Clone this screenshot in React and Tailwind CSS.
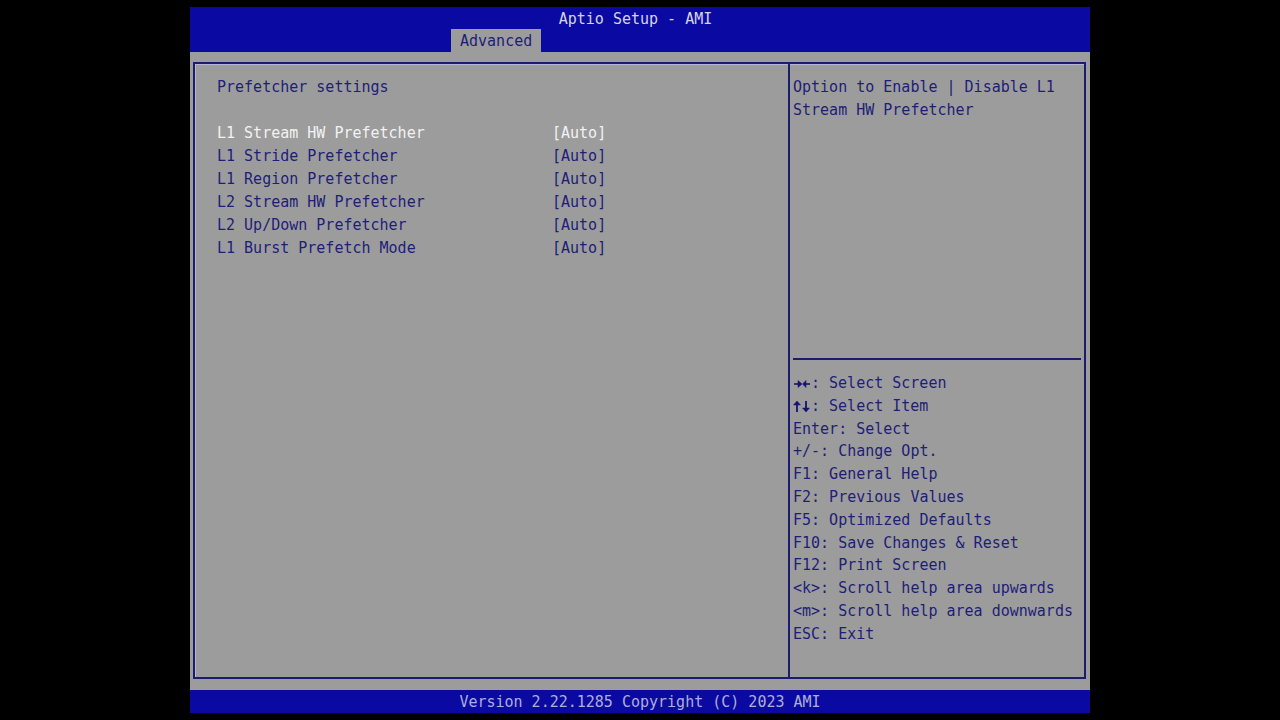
import React from 'react'

const items = [
  { label: 'L1 Stream HW Prefetcher', value: '[Auto]', active: true },
  { label: 'L1 Stride Prefetcher', value: '[Auto]' },
  { label: 'L1 Region Prefetcher', value: '[Auto]' },
  { label: 'L2 Stream HW Prefetcher', value: '[Auto]' },
  { label: 'L2 Up/Down Prefetcher', value: '[Auto]' },
  { label: 'L1 Burst Prefetch Mode', value: '[Auto]' },
]

// arrow glyphs for the first two help lines
const LeftRight = () => (
  <svg width="18" height="23" viewBox="0 0 18 23" className="shrink-0">
    <g fill="#14146e" stroke="#14146e">
      <line x1="1" y1="12" x2="6" y2="12" strokeWidth="1.6" />
      <polygon points="5,8.5 9,12 5,15.5" strokeWidth="0.5" />
      <line x1="17" y1="12" x2="12" y2="12" strokeWidth="1.6" />
      <polygon points="13,8.5 9.5,12 13,15.5" strokeWidth="0.5" />
    </g>
  </svg>
)

const UpDown = () => (
  <svg width="18" height="23" viewBox="0 0 18 23" className="shrink-0">
    <g fill="#14146e" stroke="#14146e">
      <line x1="4" y1="9" x2="4" y2="17" strokeWidth="1.8" />
      <polygon points="0.5,10 4,6 7.5,10" strokeWidth="0.5" />
      <line x1="13" y1="6" x2="13" y2="14" strokeWidth="1.8" />
      <polygon points="9.5,13 13,17 16.5,13" strokeWidth="0.5" />
    </g>
  </svg>
)

const keys = [
  { k: <LeftRight />, text: ': Select Screen' },
  { k: <UpDown />, text: ': Select Item' },
  { k: 'Enter', text: ': Select' },
  { k: '+/-', text: ': Change Opt.' },
  { k: 'F1', text: ': General Help' },
  { k: 'F2', text: ': Previous Values' },
  { k: 'F5', text: ': Optimized Defaults' },
  { k: 'F10', text: ': Save Changes & Reset' },
  { k: 'F12', text: ': Print Screen' },
  { k: '<k>', text: ': Scroll help area upwards' },
  { k: '<m>', text: ': Scroll help area downwards' },
  { k: 'ESC', text: ': Exit' },
]

export default function App() {
  return (
    <div className="w-[1280px] h-[720px] bg-black pt-[7px] pl-[190px] font-['DejaVu_Sans_Mono',monospace] text-[15px] leading-[23px]">
      <div className="w-[900px] h-[706px] flex flex-col">
        {/* Header */}
        <div className="h-[45px] bg-[#0a0aa2] flex flex-col">
          <div className="h-[22px] text-center pr-[9px] text-[#d4d4e4] leading-[24px]">Aptio Setup - AMI</div>
          <div className="flex-1 flex items-end">
            <div className="ml-[261px] w-[90px] h-[23px] bg-[#9c9c9c] pl-[9px] text-[#1e1e78] leading-[25px]">Advanced</div>
          </div>
        </div>

        {/* Body */}
        <div className="flex-1 bg-[#9c9c9c] pt-[10px] pl-[3px] pr-[4px] pb-[11px] flex">
          <div className="flex-1 flex border-2 border-[#1c1c6e] shadow-[inset_1px_1px_0_#b4b4d8]">
            {/* Left panel */}
            <div className="w-[593px] pl-[22px] pt-[12px] text-[#1e1e78]">
              <div>Prefetcher settings</div>
              <div className="h-[23px]" />
              {items.map((it) => (
                <div key={it.label} className={`grid grid-cols-[335px_1fr] ${it.active ? 'text-[#f2f2f2]' : ''}`}>
                  <span>{it.label}</span>
                  <span>{it.value}</span>
                </div>
              ))}
            </div>

            {/* Divider */}
            <div className="w-[2px] bg-[#1c1c6e]" />

            {/* Right panel */}
            <div className="flex-1 flex flex-col pl-[3px] pr-[3px] text-[#1e1e78]">
              <div className="h-[294px] pt-[12px]">
                <div>Option to Enable | Disable L1</div>
                <div>Stream HW Prefetcher</div>
              </div>
              <div className="h-[2px] bg-[#1c1c6e]" />
              <div className="pt-[12px] leading-[22.8px]">
                {keys.map((k, i) => (
                  <div key={i} className="whitespace-pre flex items-center h-[22.8px]">
                    {typeof k.k === 'string' ? <span>{k.k}</span> : k.k}
                    <span>{k.text}</span>
                  </div>
                ))}
              </div>
            </div>
          </div>
        </div>

        {/* Footer */}
        <div className="h-[23px] bg-[#0a0aa2] text-center text-[#aeaed8] leading-[24px]">
          Version 2.22.1285 Copyright (C) 2023 AMI
        </div>
      </div>
    </div>
  )
}
